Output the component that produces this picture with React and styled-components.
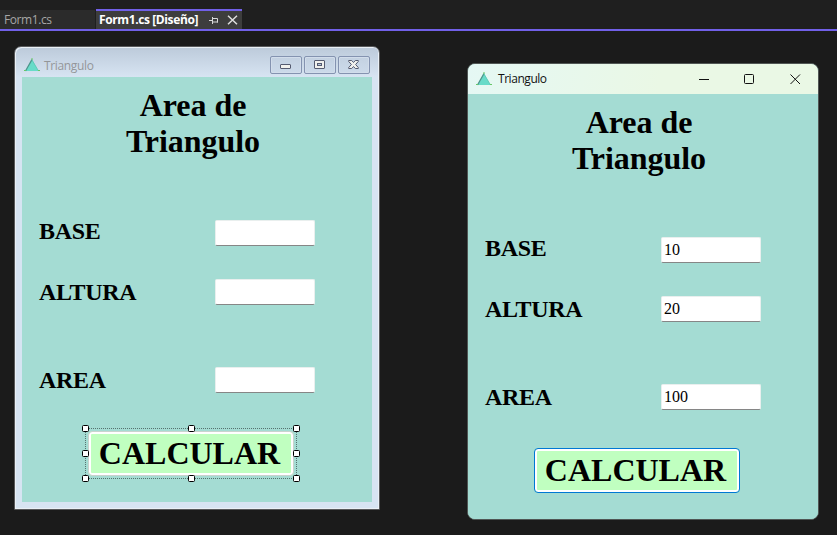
import React from "react";
import styled, { createGlobalStyle, css } from "styled-components";

const Global = createGlobalStyle`
  * { box-sizing: border-box; }
  body { margin: 0; background: #1b1b1b; overflow: hidden; }
`;

const Screen = styled.div`
  width: 837px;
  height: 535px;
  display: flex;
  flex-direction: column;
  background: #1b1b1b;
  font-family: "Open Sans", "Noto Sans", sans-serif;
`;

const TabStrip = styled.nav`
  height: 31px;
  flex: none;
  display: flex;
  align-items: flex-end;
  gap: 1px;
  background: #1f1f1f;
  border-bottom: 2px solid #7160e8;
`;

const Tab = styled.div`
  display: flex;
  align-items: center;
  width: ${(p) => (p.$active ? 146 : 95)}px;
  height: ${(p) => (p.$active ? 20 : 19)}px;
  padding-left: ${(p) => (p.$active ? 3 : 4)}px;
  background: ${(p) => (p.$active ? "#3d3d3d" : "#2b2b2b")};
  border-top: ${(p) => (p.$active ? "2px solid #7160e8" : "none")};
`;

const TabLabel = styled.span`
  width: ${(p) => (p.$active ? 110 : 60)}px;
  flex: none;
  white-space: nowrap;
  font-size: 12px;
  line-height: 18px;
  font-weight: ${(p) => (p.$active ? 700 : 400)};
  letter-spacing: ${(p) => (p.$active ? "-0.39px" : "-0.42px")};
  color: ${(p) => (p.$active ? "#fff" : "#a6a6a6")};
`;

const TabIcon = styled.svg`
  display: block;
  flex: none;
  margin-right: 8px;
`;

const Workspace = styled.main`
  display: flex;
  align-items: flex-start;
  padding: 15px 0 0 14px;
`;

const DesignWindow = styled.section`
  width: 366px;
  height: 464px;
  flex: none;
  padding: 0 7px 7px;
  border: 1px solid #58595b;
  border-radius: 7px 7px 0 0;
  background: linear-gradient(#bccada 0, #d7e4f2 30px);
  box-shadow: inset 1px 1px 0 #eaf0f6, inset -1px -1px 0 #eaf0f6;
`;

const RunWindow = styled.section`
  width: 352px;
  height: 457px;
  flex: none;
  margin: 17px 0 0 87px;
  border: 1px solid #505654;
  border-radius: 8px;
  overflow: hidden;
  background: #a4dcd3;
`;

const TitleBar = styled.header`
  display: flex;
  align-items: center;
  height: 30px;
  ${(p) =>
    p.$running
      ? css`
          padding: 0 15px 0 8px;
          background: linear-gradient(100deg, #e5f8f4, #eaf8e5 55%);
        `
      : css`
          padding: 7px 2px 0;
        `}
`;

const WindowTitle = styled.h2`
  flex: 1;
  margin: 0 0 0 ${(p) => (p.$running ? 6 : 4)}px;
  font-size: 12px;
  line-height: 18px;
  font-weight: 400;
  letter-spacing: ${(p) => (p.$running ? "-0.45px" : "-0.35px")};
  color: ${(p) => (p.$running ? "#111" : "#949699")};
`;

const ClassicControls = styled.div`
  display: flex;
  gap: 2px;
  margin-top: -1px;
`;

const ClassicButton = styled.button`
  width: 32px;
  height: 18px;
  padding: 0;
  display: grid;
  place-items: center;
  border: 1px solid #8493b0;
  border-radius: 2px;
  background: linear-gradient(#c3d1e1, #ccdaea);
  box-shadow: inset 0 0 0 1px #d2ddeb;
`;

const ModernControls = styled.div`
  display: flex;
  gap: 30px;
  align-items: center;
`;

const Body = styled.form`
  width: 350px;
  height: 425px;
  display: flex;
  flex-direction: column;
  background: #a4dcd3;
  color: #000;
  font-family: "Liberation Serif", "Times New Roman", serif;
`;

const Heading = styled.h1`
  width: 160px;
  height: 72px;
  margin: 10px 0 61px 91px;
  text-align: center;
  font-size: 32px;
  line-height: 36px;
  font-weight: 700;
  letter-spacing: -0.05px;
`;

const Field = styled.label`
  display: grid;
  grid-template-columns: 176px 100px;
  align-items: start;
  height: 26px;
  padding-left: 17px;
  margin-bottom: ${(p) => p.$after}px;
`;

const FieldName = styled.span`
  font-size: 24px;
  line-height: 26px;
  font-weight: 700;
  margin-top: ${(p) => p.$shift}px;
  letter-spacing: -0.3px;
`;

const TextBox = styled.input`
  width: 100px;
  height: 26px;
  padding: 0 2px 1px;
  border: 1px solid #e9efee;
  border-bottom-color: #868686;
  border-radius: 2px;
  outline: none;
  background: #fff;
  font: 16px "Liberation Serif", "Times New Roman", serif;
  color: #000;
`;

const ButtonArea = styled.div`
  position: relative;
  width: 206px;
  height: 45px;
  margin-left: 66px;
`;

const CalcButton = styled.button`
  width: 206px;
  height: 45px;
  padding: 0 3px 0 0;
  display: block;
  border: 1px solid ${(p) => (p.$focused ? "#0078d4" : "#c9d3cd")};
  border-radius: 4px;
  background: #c0ffc0;
  box-shadow: inset 0 0 0 2px #fff;
  font: 700 32px/43px "Liberation Serif", "Times New Roman", serif;
  color: #000;
`;

const Selection = styled.svg`
  position: absolute;
  left: -6px;
  top: -6px;
  pointer-events: none;
`;

function TriangleIcon() {
  return (
    <svg width="16" height="15" viewBox="0 0 16 15">
      <path d="M8 1.5 14.5 13H1.5Z" fill="#68dbc9" />
      <path d="M8 1.5 1.5 13" stroke="#4c948a" strokeWidth="1.3" />
      <path d="M8 2 14.5 13" stroke="#58c5b3" strokeWidth=".8" />
      <path d="M7 .5h2v1H7zM0 12h2v1H0zM14 12h2v1h-2z" fill="#68c767" />
    </svg>
  );
}

function ClassicGlyph({ kind }) {
  return (
    <svg width="12" height="10" viewBox="0 0 12 10">
      {kind === "min" && (
        <rect x=".5" y="4.5" width="10" height="4" rx=".5" fill="#f1f1ed" stroke="#555b70" />
      )}
      {kind === "max" && (
        <>
          <rect x=".5" y=".5" width="10" height="8" rx=".5" fill="#f1f1ed" stroke="#555b70" />
          <rect x="3.5" y="3.5" width="4" height="2" fill="#b8c8dc" stroke="#555b70" />
        </>
      )}
      {kind === "close" && (
        <path
          d="M.7.5h3l1.8 2 1.8-2h3v1L7.6 4.5l2.7 3v1h-3l-1.8-2-1.8 2h-3v-1l2.7-3L.7 1.5Z"
          fill="#f1f1ed"
          stroke="#555b70"
        />
      )}
    </svg>
  );
}

function SelectionFrame() {
  const points = [
    [3, 3], [109, 3], [214, 3],
    [3, 28], [214, 28],
    [3, 53], [109, 53], [214, 53],
  ];
  return (
    <Selection width="218" height="57" viewBox="0 0 218 57">
      <path
        d="M3 3.5H215M3 53.5H215M3.5 3V54M214.5 3V54"
        stroke="#56736f"
        strokeDasharray="1 1"
        shapeRendering="crispEdges"
      />
      {points.map(([x, y]) => (
        <rect key={`${x}-${y}`} x={x - 2.5} y={y - 2.5} width="6" height="6" rx="1" fill="#fff" stroke="#000" />
      ))}
    </Selection>
  );
}

function TriangleForm({ base = "", height = "", area = "", selected, focused }) {
  return (
    <Body onSubmit={(e) => e.preventDefault()}>
      <Heading>Area de Triangulo</Heading>
      <Field $after={33}>
        <FieldName $shift={-2}>BASE</FieldName>
        <TextBox defaultValue={base} />
      </Field>
      <Field $after={62}>
        <FieldName $shift={0}>ALTURA</FieldName>
        <TextBox defaultValue={height} />
      </Field>
      <Field $after={38}>
        <FieldName $shift={0}>AREA</FieldName>
        <TextBox defaultValue={area} />
      </Field>
      <ButtonArea>
        <CalcButton type="button" $focused={focused}>CALCULAR</CalcButton>
        {selected && <SelectionFrame />}
      </ButtonArea>
    </Body>
  );
}

export default function App() {
  return (
    <Screen>
      <Global />
      <TabStrip>
        <Tab><TabLabel>Form1.cs</TabLabel></Tab>
        <Tab $active>
          <TabLabel $active>Form1.cs [Diseño]</TabLabel>
          <TabIcon width="10" height="9" viewBox="0 0 10 9" fill="none" stroke="#d8d8d8">
            <path d="M0 4.5h3M3.5 1v7M4 2.5h4.5v4M4 6h5" />
          </TabIcon>
          <TabIcon width="11" height="10" viewBox="0 0 11 10">
            <path d="m1 .8 9 8.4M10 .8 1 9.2" stroke="#dedede" strokeWidth="1.5" />
          </TabIcon>
        </Tab>
      </TabStrip>
      <Workspace>
        <DesignWindow>
          <TitleBar>
            <TriangleIcon />
            <WindowTitle>Triangulo</WindowTitle>
            <ClassicControls>
              <ClassicButton aria-label="Minimizar"><ClassicGlyph kind="min" /></ClassicButton>
              <ClassicButton aria-label="Maximizar"><ClassicGlyph kind="max" /></ClassicButton>
              <ClassicButton aria-label="Cerrar"><ClassicGlyph kind="close" /></ClassicButton>
            </ClassicControls>
          </TitleBar>
          <TriangleForm selected />
        </DesignWindow>
        <RunWindow>
          <TitleBar $running>
            <TriangleIcon />
            <WindowTitle $running>Triangulo</WindowTitle>
            <ModernControls>
              <svg width="16" height="12"><path d="M4 6.5h10" stroke="#111" /></svg>
              <svg width="16" height="12"><rect x="3.5" y="1.5" width="9" height="9" rx="1" fill="none" stroke="#111" /></svg>
              <svg width="16" height="12"><path d="m3.5 1.5 9.5 9.5M13 1.5 3.5 11" stroke="#111" /></svg>
            </ModernControls>
          </TitleBar>
          <TriangleForm base="10" height="20" area="100" focused />
        </RunWindow>
      </Workspace>
    </Screen>
  );
}
